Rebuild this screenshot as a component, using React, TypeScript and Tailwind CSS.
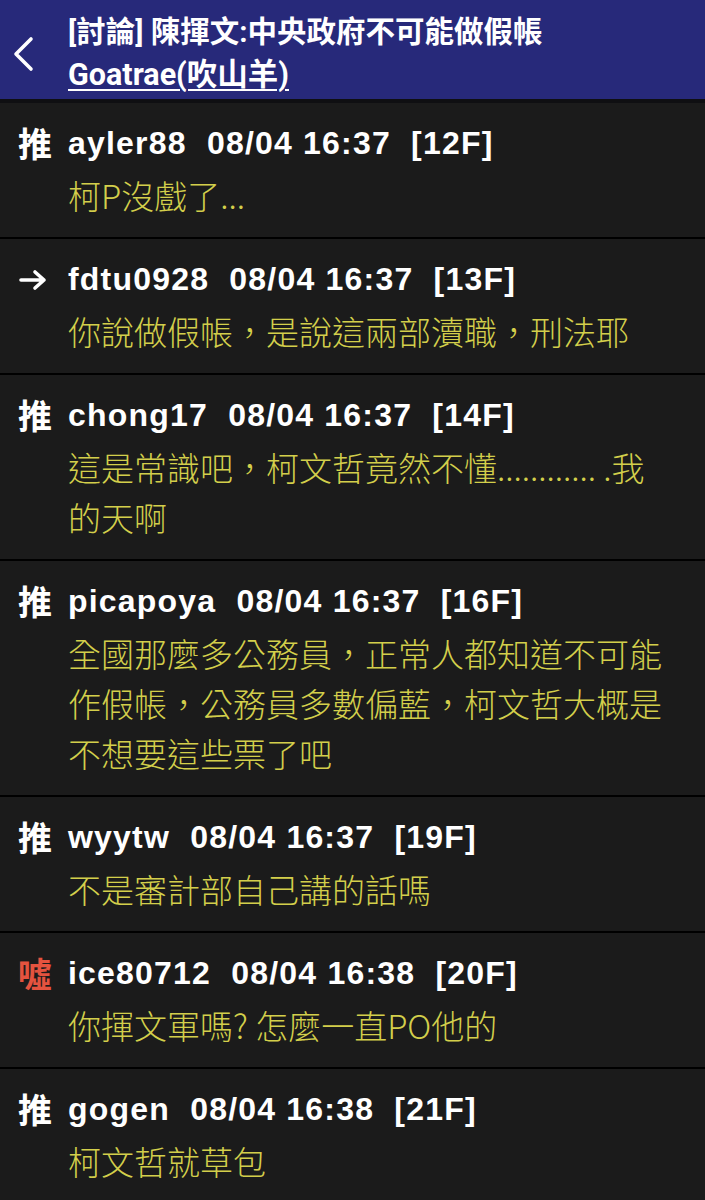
const cjk = '"Noto Sans CJK TC", "Noto Sans CJK SC", sans-serif';
const latin = '"Liberation Sans", Arial, "Noto Sans CJK TC", sans-serif';

type Push = {
  tag: "推" | "→" | "噓";
  user: string;
  time: string;
  floor: string;
  lines: string[];
};

const pushes: Push[] = [
  { tag: "推", user: "ayler88", time: "08/04 16:37", floor: "[12F]", lines: ["柯P沒戲了..."] },
  { tag: "→", user: "fdtu0928", time: "08/04 16:37", floor: "[13F]", lines: ["你說做假帳，是說這兩部瀆職，刑法耶"] },
  {
    tag: "推",
    user: "chong17",
    time: "08/04 16:37",
    floor: "[14F]",
    lines: ["這是常識吧，柯文哲竟然不懂............ .我", "的天啊"],
  },
  {
    tag: "推",
    user: "picapoya",
    time: "08/04 16:37",
    floor: "[16F]",
    lines: ["全國那麼多公務員，正常人都知道不可能", "作假帳，公務員多數偏藍，柯文哲大概是", "不想要這些票了吧"],
  },
  { tag: "推", user: "wyytw", time: "08/04 16:37", floor: "[19F]", lines: ["不是審計部自己講的話嗎"] },
  { tag: "噓", user: "ice80712", time: "08/04 16:38", floor: "[20F]", lines: ["你揮文軍嗎? 怎麼一直PO他的"] },
  { tag: "推", user: "gogen", time: "08/04 16:38", floor: "[21F]", lines: ["柯文哲就草包"] },
];

function Tag({ tag }: { tag: Push["tag"] }) {
  if (tag === "→") {
    return (
      <svg width="30" height="22" viewBox="0 0 30 22" className="mt-[1px]">
        <path d="M3 11 H26 M17 3 L26 11 L17 19" fill="none" stroke="white" strokeWidth="3.6" strokeLinecap="round" strokeLinejoin="round" />
      </svg>
    );
  }
  return (
    <span
      className={`text-[34px] font-bold leading-[44px] ${tag === "噓" ? "text-[#e4533f]" : "text-white"}`}
      style={{ fontFamily: cjk }}
    >
      {tag}
    </span>
  );
}

function PushRow({ p }: { p: Push }) {
  return (
    <div className="flex border-b-2 border-black pt-[18px] pb-[17px] pl-[18px]">
      <div className="flex h-[44px] w-[50px] shrink-0 items-center">
        <Tag tag={p.tag} />
      </div>
      <div className="flex flex-col">
        <div
          className="whitespace-pre text-[32px] font-bold leading-[44px] tracking-[1.2px] text-white"
          style={{ fontFamily: latin }}
        >
          {`${p.user}  ${p.time}  ${p.floor}`}
        </div>
        <div className="mt-[5px] text-[33px] font-light leading-[50px] text-[#d3cf4b]" style={{ fontFamily: cjk }}>
          {p.lines.map((l, i) => (
            <div key={i} className="whitespace-pre">
              {l}
            </div>
          ))}
        </div>
      </div>
    </div>
  );
}

export default function App() {
  return (
    <main className="h-[1200px] w-[705px] overflow-hidden bg-[#1b1b1b]">
      <header className="flex h-[103px] items-center border-b-4 border-[#0f0f12] bg-[#27297a]">
        <div className="flex w-[68px] shrink-0 pl-[10px] pt-[8px]">
          <svg width="26" height="36" viewBox="0 0 26 36">
            <path d="M21 3 L6 18 L21 33" fill="none" stroke="white" strokeWidth="3.6" strokeLinecap="round" strokeLinejoin="round" />
          </svg>
        </div>
        <div className="flex flex-col pt-[6px]" style={{ fontFamily: `Roboto, ${cjk}` }}>
          <div className="text-[29.5px] font-bold leading-[44px] text-white">[討論] 陳揮文:中央政府不可能做假帳</div>
          <div className="text-[30.5px] font-bold leading-[42px] text-white underline underline-offset-[4px] decoration-2">
            Goatrae(吹山羊)
          </div>
        </div>
      </header>
      {pushes.map((p, i) => (
        <PushRow key={i} p={p} />
      ))}
    </main>
  );
}
